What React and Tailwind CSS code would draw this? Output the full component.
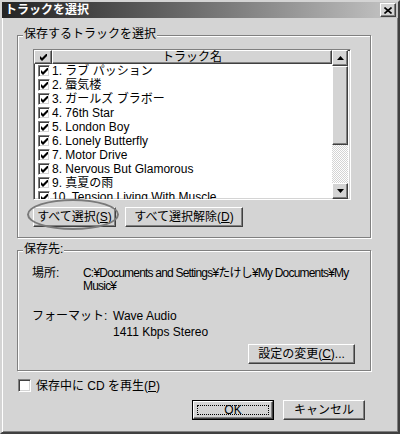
import React from 'react'

const raised = 'bg-[#d4d4d4] border border-t-white border-l-white border-r-[#404040] border-b-[#404040] shadow-[inset_-1px_-1px_0_#808080]'
const sunken = 'border border-t-[#808080] border-l-[#808080] border-r-white border-b-white shadow-[inset_1px_1px_0_#404040,inset_-1px_-1px_0_#d4d4d4]'
const etched = 'relative border border-[#808080] shadow-[inset_1px_1px_0_#ffffff,1px_1px_0_#ffffff]'

const tracks = [
  '1. ラブ パッション',
  '2. 蜃気楼',
  '3. ガールズ ブラボー',
  '4. 76th Star',
  '5. London Boy',
  '6. Lonely Butterfly',
  '7. Motor Drive',
  '8. Nervous But Glamorous',
  '9. 真夏の雨',
  '10. Tension Living With Muscle',
]

function Tick() {
  return (
    <svg width="7" height="7" viewBox="0 0 7 7">
      <polygon points="0,2 2,4 6,0 7,0 7,2 2,7 0,5" fill="#000" />
    </svg>
  )
}

function Check({ checked }) {
  return (
    <span className={`w-[12px] h-[12px] bg-white shrink-0 flex items-center justify-center ${sunken}`}>
      {checked && <Tick />}
    </span>
  )
}

function Arrow({ down }) {
  return (
    <svg width="7" height="4" viewBox="0 0 7 4">
      <polygon points={down ? '0,0 7,0 3.5,4' : '3.5,0 7,4 0,4'} fill="#000" />
    </svg>
  )
}

export default function App() {
  return (
    <div className="relative w-[400px] h-[434px] bg-[#d4d4d4] border-2 border-t-[#d4d4d4] border-l-[#d4d4d4] border-r-[#404040] border-b-[#404040] shadow-[inset_1px_1px_0_#ffffff,inset_-1px_-1px_0_#808080] font-['Liberation_Sans','Noto_Sans_CJK_JP',sans-serif] text-[12px] leading-[12px] text-black flex flex-col overflow-hidden">

      {/* title bar */}
      <div className="h-[16px] shrink-0 flex items-center justify-between pl-[3px] pr-[2px] bg-linear-to-r from-[#242424] to-[#c6c6c6]">
        <span className="text-white font-bold text-[12px] leading-none">トラックを選択</span>
        <div className={`w-[16px] h-[14px] flex items-center justify-center ${raised}`}>
          <svg width="8" height="7" viewBox="0 0 8 7">
            <path d="M0.5 0.5L7.5 6.5M7.5 0.5L0.5 6.5" stroke="#000" strokeWidth="1.6" />
          </svg>
        </div>
      </div>

      {/* tracks group */}
      <div className={`ml-[15px] mt-[17px] w-[354px] h-[203px] shrink-0 pl-[15px] pt-[13px] flex flex-col ${etched}`}>
        <span className="absolute left-[5px] -top-[8px] px-[1px] bg-[#d4d4d4] leading-[13px]">保存するトラックを選択</span>

        <div className={`w-[318px] h-[151px] bg-white flex ${sunken}`}>
          <div className="w-[298px] flex flex-col overflow-hidden">
            <div className="h-[14px] shrink-0 flex">
              <div className={`w-[18px] flex items-center justify-center ${raised}`}>
                <Tick />
              </div>
              <div className={`flex-1 flex items-center justify-center ${raised}`}>トラック名</div>
            </div>
            {tracks.map(t => (
              <div key={t} className="h-[14px] shrink-0 flex items-center pl-[4px] gap-[2px] whitespace-nowrap">
                <Check checked />
                <span>{t}</span>
              </div>
            ))}
          </div>
          <div className="w-[16px] flex flex-col">
            <div className={`h-[16px] shrink-0 flex items-center justify-center ${raised}`}><Arrow /></div>
            <div className={`h-[79px] shrink-0 ${raised}`} />
            <div className="flex-1 bg-[image:repeating-conic-gradient(#d4d4d4_0_25%,#ffffff_0_50%)] bg-[length:2px_2px]" />
            <div className={`h-[16px] shrink-0 flex items-center justify-center ${raised}`}><Arrow down /></div>
          </div>
        </div>

        <div className="mt-[7px] flex gap-[9px]">
          <div className={`w-[83px] h-[20px] flex items-center justify-center ${raised}`}>
            すべて選択(<span className="underline">S</span>)
          </div>
          <div className={`w-[118px] h-[20px] flex items-center justify-center ${raised}`}>
            すべて選択解除(<span className="underline">D</span>)
          </div>
        </div>
      </div>

      {/* destination group */}
      <div className={`ml-[15px] mt-[12px] w-[354px] h-[121px] shrink-0 pl-[14px] pt-[16px] flex flex-col ${etched}`}>
        <span className="absolute left-[5px] -top-[8px] px-[1px] bg-[#d4d4d4] leading-[13px]">保存先:</span>

        <div className="flex">
          <span className="w-[51px] shrink-0">場所:</span>
          <div className="flex flex-col whitespace-nowrap tracking-[-0.8px] leading-[13px]">
            <span>C:¥Documents and Settings¥たけし¥My Documents¥My</span>
            <span>Music¥</span>
          </div>
        </div>

        <div className="flex mt-[17px]">
          <span className="w-[81px] shrink-0">フォーマット:</span>
          <div className="flex flex-col gap-[4px]">
            <span>Wave Audio</span>
            <span>1411 Kbps Stereo</span>
          </div>
        </div>

        <div className={`mt-[6px] self-end mr-[15px] w-[107px] h-[20px] flex items-center justify-center ${raised}`}>
          設定の変更(<span className="underline">C</span>)...
        </div>
      </div>

      {/* play option */}
      <div className="mt-[8px] ml-[16px] h-[13px] flex items-center gap-[5px]">
        <span className={`w-[13px] h-[13px] bg-white ${sunken}`} />
        <span>保存中に CD を再生(<span className="underline">P</span>)</span>
      </div>

      {/* dialog buttons */}
      <div className="mt-[8px] pr-[33px] flex justify-end gap-[9px]">
        <div className="w-[82px] h-[20px] border border-black">
          <div className={`w-full h-full p-[3px] ${raised}`}>
            <div className="w-full h-full border border-dotted border-black flex items-center justify-center">OK</div>
          </div>
        </div>
        <div className={`w-[82px] h-[20px] flex items-center justify-center ${raised}`}>キャンセル</div>
      </div>

      {/* annotation ring */}
      <div className="absolute left-[25px] top-[197px] w-[92px] h-[31px] rounded-[50%] border-2 border-[#7a7a7a]" />
    </div>
  )
}
